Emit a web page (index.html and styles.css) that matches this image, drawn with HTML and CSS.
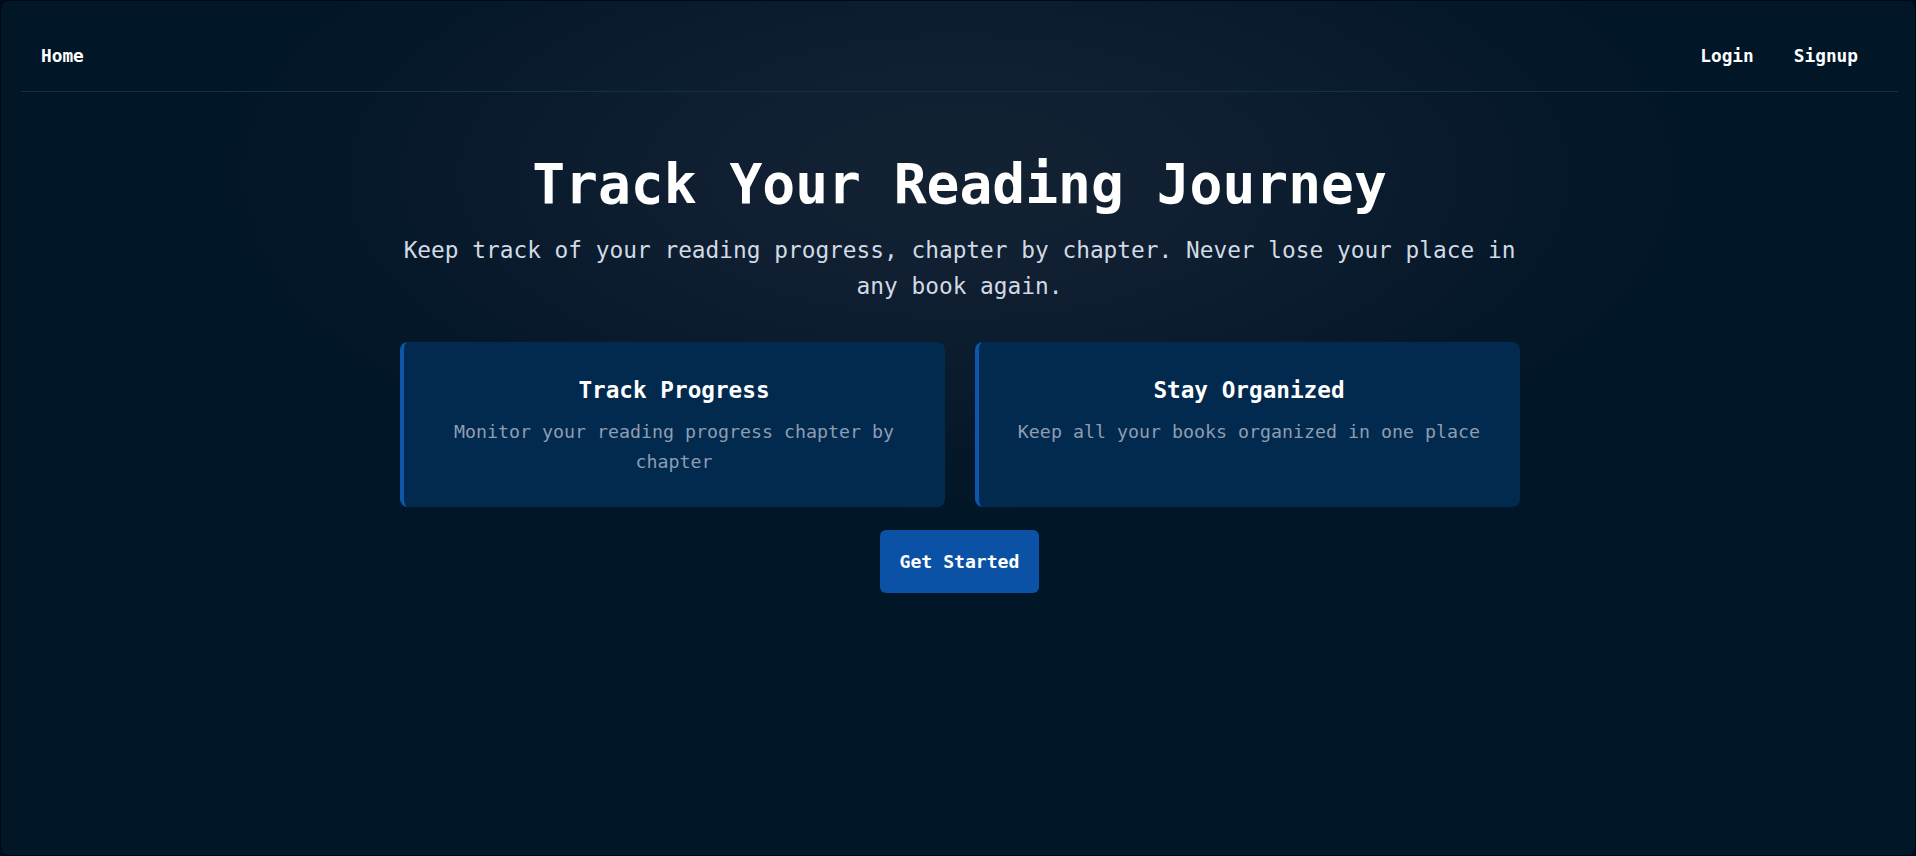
FILE: index.html
```html
<!DOCTYPE html>
<html lang="en">
<head>
<meta charset="utf-8">
<title>Reading Tracker</title>
<link rel="stylesheet" href="styles.css">
</head>
<body>
<div class="app">
  <nav class="nav">
    <a class="nav-home" href="#">Home</a>
    <div class="nav-right">
      <a class="nav-link" href="#">Login</a>
      <a class="nav-link" href="#">Signup</a>
    </div>
  </nav>
  <main class="hero">
    <h1 class="hero-title">Track Your Reading Journey</h1>
    <p class="hero-sub">Keep track of your reading progress, chapter by chapter. Never lose your place in any book again.</p>
    <div class="features">
      <div class="card">
        <h3 class="card-title">Track Progress</h3>
        <p class="card-text">Monitor your reading progress chapter by chapter</p>
      </div>
      <div class="card">
        <h3 class="card-title">Stay Organized</h3>
        <p class="card-text">Keep all your books organized in one place</p>
      </div>
    </div>
    <a class="cta" href="#">Get Started</a>
  </main>
</div>
</body>
</html>
```

FILE: styles.css
```css
html, body {
  margin: 0;
  padding: 0;
  height: 100%;
  background: #020c16;
  overflow: hidden;
}

body {
  font-family: "DejaVu Sans Mono", "Liberation Mono", monospace;
  color: #ffffff;
}

.app {
  box-sizing: border-box;
  height: 856px;
  border: 1px solid #000913;
  border-radius: 8px;
  padding: 19px 17px 0 20px;
  background:
    radial-gradient(ellipse 760px 340px at 50% 175px, #132233 0%, #0f1f31 35%, #07192b 70%, #011627 100%),
    #011627;
}

.nav {
  display: flex;
  justify-content: space-between;
  align-items: center;
  padding: 23.5px 20px;
  border-bottom: 1px solid #0d3153;
}

.nav a {
  color: #ffffff;
  text-decoration: none;
  font-size: 17.8px;
  font-weight: bold;
  line-height: 24px;
}

.nav-right {
  display: flex;
}

.nav-link {
  padding: 0 20px;
}

.hero {
  max-width: 1120px;
  margin: 0 auto;
  padding-top: 60px;
  display: flex;
  flex-direction: column;
  align-items: center;
  text-align: center;
}

.hero-title {
  margin: 0;
  font-size: 54.6px;
  line-height: 64px;
  font-weight: bold;
  color: #ffffff;
}

.hero-sub {
  margin: 16px 0 0;
  font-size: 22.8px;
  line-height: 36px;
  color: #d2dae4;
}

.features {
  align-self: stretch;
  display: grid;
  grid-template-columns: 1fr 1fr;
  gap: 30px;
  margin-top: 38px;
}

.card {
  background: #022a4e;
  border-left: 4px solid #0d56ab;
  border-radius: 8px;
  padding: 33px 32px 30px;
}

.card-title {
  margin: 0;
  font-size: 22.7px;
  line-height: 30px;
  font-weight: bold;
  color: #ffffff;
}

.card-text {
  margin: 12px 0 0;
  font-size: 18.3px;
  line-height: 30px;
  color: #8d9db1;
}

.cta {
  margin-top: 23px;
  display: inline-block;
  background: #0b52a7;
  color: #ffffff;
  text-decoration: none;
  font-size: 18.1px;
  font-weight: bold;
  line-height: 23px;
  padding: 20px;
  border-radius: 6px;
}
```
